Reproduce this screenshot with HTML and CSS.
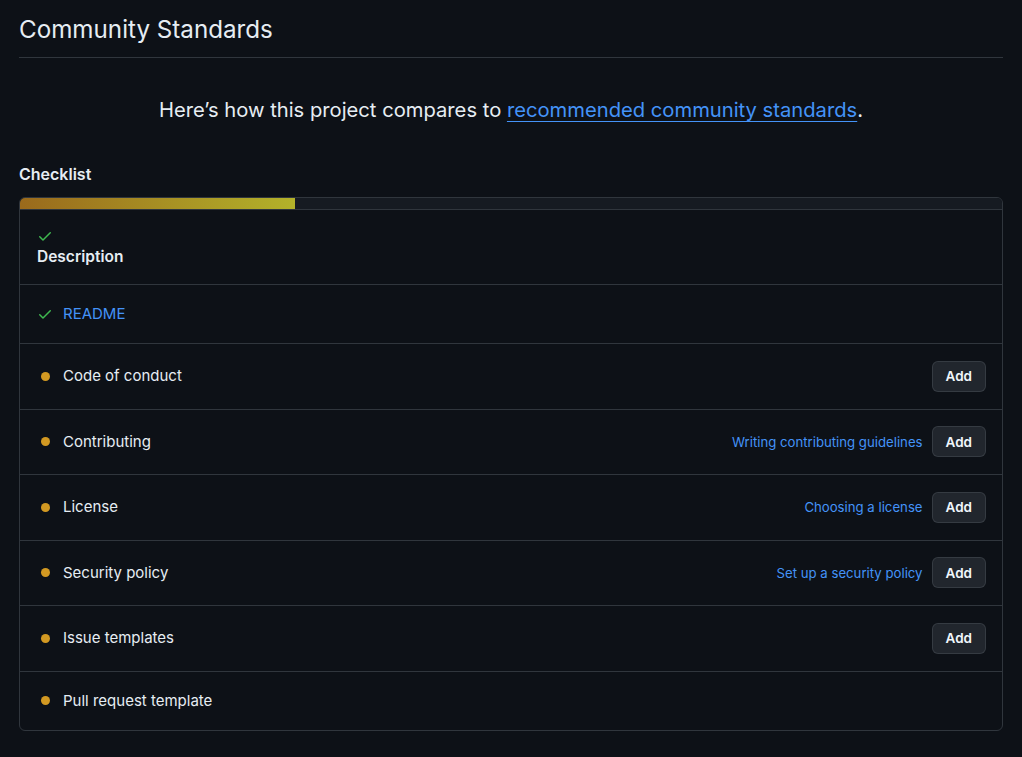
FILE: index.html
```html
<!DOCTYPE html>
<html lang="en">
<head>
<meta charset="utf-8">
<title>Community Standards</title>
<link rel="stylesheet" href="styles.css">
</head>
<body>
<main class="page">
  <h1 class="page-title">Community Standards</h1>
  <p class="lead">Here’s how this project compares to <a href="#" class="lead-link">recommended community standards</a>.</p>
  <h2 class="section-title">Checklist</h2>
  <div class="box">
    <div class="progress"><div class="progress-fill" style="width: 28%"></div></div>
    <ul class="list">
      <li class="row row-stacked">
        <svg class="icon-check" viewBox="0 0 16 16" width="16" height="16"><path d="M13.78 4.22a.75.75 0 0 1 0 1.06l-7.25 7.25a.75.75 0 0 1-1.06 0L2.22 9.28a.75.75 0 0 1 1.06-1.06L6 10.940l6.72-6.72a.75.75 0 0 1 1.060 0Z"/></svg>
        <span class="label label-bold">Description</span>
      </li>
      <li class="row row-short">
        <div class="row-main">
          <svg class="icon-check" viewBox="0 0 16 16" width="16" height="16"><path d="M13.78 4.22a.75.75 0 0 1 0 1.06l-7.25 7.25a.75.75 0 0 1-1.06 0L2.22 9.28a.75.75 0 0 1 1.06-1.06L6 10.94l6.72-6.72a.75.75 0 0 1 1.06 0Z"/></svg>
          <a href="#" class="label label-link">README</a>
        </div>
      </li>
      <li class="row">
        <div class="row-main"><span class="dot-wrap"><span class="dot"></span></span><span class="label">Code of conduct</span></div>
        <div class="row-actions"><button class="btn">Add</button></div>
      </li>
      <li class="row">
        <div class="row-main"><span class="dot-wrap"><span class="dot"></span></span><span class="label">Contributing</span></div>
        <div class="row-actions"><a href="#" class="help-link">Writing contributing guidelines</a><button class="btn">Add</button></div>
      </li>
      <li class="row">
        <div class="row-main"><span class="dot-wrap"><span class="dot"></span></span><span class="label">License</span></div>
        <div class="row-actions"><a href="#" class="help-link">Choosing a license</a><button class="btn">Add</button></div>
      </li>
      <li class="row">
        <div class="row-main"><span class="dot-wrap"><span class="dot"></span></span><span class="label">Security policy</span></div>
        <div class="row-actions"><a href="#" class="help-link">Set up a security policy</a><button class="btn">Add</button></div>
      </li>
      <li class="row">
        <div class="row-main"><span class="dot-wrap"><span class="dot"></span></span><span class="label">Issue templates</span></div>
        <div class="row-actions"><button class="btn">Add</button></div>
      </li>
      <li class="row row-short">
        <div class="row-main"><span class="dot-wrap"><span class="dot"></span></span><span class="label">Pull request template</span></div>
      </li>
    </ul>
  </div>
</main>
</body>
</html>
```

FILE: styles.css
```css
* { box-sizing: border-box; }
html, body { margin: 0; padding: 0; background: #0d1117; }
body {
  font-family: Inter, "Noto Sans", "Liberation Sans", sans-serif;
  color: #e6edf3;
  font-size: 14px;
}
.page { padding: 0 19px 26px; }
.page-title {
  margin: 0;
  padding: 13px 0 11px;
  font-size: 24.2px;
  font-weight: 400;
  line-height: 33px;
  border-bottom: 1px solid #30363d;
}
.lead {
  margin: 0;
  padding: 38px 0 0;
  text-align: center;
  font-size: 20.2px;
  line-height: 28px;
  font-weight: 400;
}
.lead-link { color: #4493f8; text-decoration: underline; text-underline-offset: 4px; text-decoration-thickness: 1px; }
.section-title {
  margin: 0;
  padding-top: 38px;
  font-size: 16px;
  font-weight: 600;
  line-height: 24px;
  padding-bottom: 11px;
}
.box {
  border: 1px solid #30363d;
  border-radius: 6px;
  overflow: hidden;
}
.progress {
  height: 12px;
  background: #161b22;
  border-bottom: 1px solid #30363d;
}
.progress-fill {
  height: 100%;
  background: linear-gradient(90deg, #9a6a1c 0%, #b3b22a 100%);
}
.list { list-style: none; margin: 0; padding: 0; }
.row {
  display: flex;
  align-items: center;
  justify-content: space-between;
  padding: 16px 16px 16px 17px;
  min-height: 65.5px;
  border-top: 1px solid #30363d;
}
.list .row:first-child { border-top: 0; }
.row-stacked {
  flex-direction: column;
  align-items: flex-start;
  justify-content: flex-start;
  padding-top: 18px;
  padding-bottom: 13px;
  min-height: 74px;
}
.row-stacked .label { line-height: 26px; }
.row-short { min-height: 59px; }
.row-main { display: flex; align-items: center; }
.icon-check { fill: #3fb950; flex: none; margin-right: 10px; display: block; }
.dot-wrap { width: 16px; margin-right: 10px; display: flex; justify-content: center; }
.dot { width: 9px; height: 9px; border-radius: 50%; background: #d29922; }
.label { font-size: 15px; line-height: 24px; color: #e6edf3; }
.label-bold { font-weight: 600; font-size: 15.5px; }
.label-link { color: #4493f8; text-decoration: none; }
.row-actions { display: flex; align-items: center; gap: 9px; }
.help-link { color: #4493f8; text-decoration: none; font-size: 13.2px; }
.btn {
  font-family: inherit;
  font-size: 13.5px;
  font-weight: 600;
  color: #f0f6fc;
  background: #21262d;
  border: 1px solid rgba(240, 246, 252, 0.1);
  border-radius: 6px;
  height: 31px;
  padding: 0 13px;
  cursor: pointer;
}
```
